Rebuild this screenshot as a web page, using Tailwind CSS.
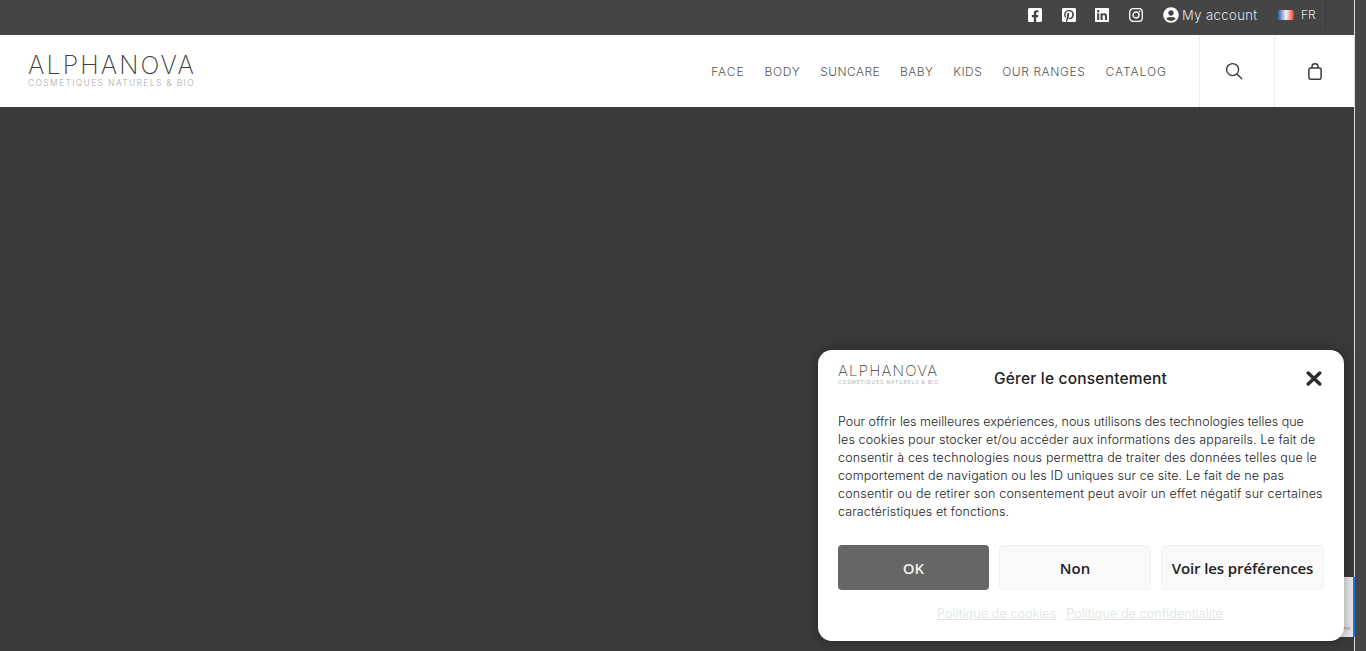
<!DOCTYPE html>
<html lang="fr">
<head>
  <meta charset="UTF-8" />
  <title>Alphanova</title>
  <script src="https://cdn.jsdelivr.net/npm/@tailwindcss/browser@4"></script>
</head>
<body class="h-[651px] overflow-hidden bg-[#3a3a3a] font-['Inter',sans-serif] antialiased">
  <div class="relative flex h-[651px] w-[1366px] overflow-hidden">

    <!-- Page -->
    <div class="flex w-[1354px] flex-col">
      <!-- Top bar -->
      <div class="flex h-[35px] items-start justify-end bg-[#454545] pr-[28px] text-white">
        <div class="flex h-[30px] items-center gap-[19.6px]">
          <svg class="h-[16px] w-[14px]" viewBox="0 0 448 512" fill="currentColor"><path d="M400 32H48A48 48 0 0 0 0 80v352a48 48 0 0 0 48 48h137.25V327.69h-63V256h63v-54.64c0-62.15 37-96.48 93.67-96.48 27.14 0 55.52 4.84 55.52 4.84v61h-31.27c-30.81 0-40.42 19.12-40.42 38.73V256h68.78l-11 71.69h-57.78V480H400a48 48 0 0 0 48-48V80a48 48 0 0 0-48-48z"/></svg>
          <svg class="h-[16px] w-[14px]" viewBox="0 0 448 512" fill="currentColor"><path d="M448 80v352c0 26.5-21.5 48-48 48H154.4c9.8-16.4 22.4-40 27.4-59.3 3-11.5 15.3-58.4 15.3-58.4 8 15.3 31.4 28.2 56.3 28.2 74.1 0 127.4-68.1 127.4-152.7 0-81.1-66.2-141.8-151.4-141.8-106 0-162.2 71.1-162.2 148.6 0 36 19.2 80.8 49.8 95.1 4.7 2.2 7.1 1.2 8.2-3.3.8-3.4 5-20.1 6.8-27.8.6-2.5.3-4.6-1.7-7-10.1-12.3-18.3-34.9-18.3-56 0-54.2 41-106.6 110.9-106.6 60.3 0 102.6 41.1 102.6 99.9 0 66.4-33.5 112.4-77.2 112.4-24.1 0-42.1-19.9-36.4-44.4 6.9-29.2 20.3-60.7 20.3-81.8 0-53-75.5-45.7-75.5 25 0 21.7 7.3 36.5 7.3 36.5-31.4 132.8-36.1 134.5-29.6 192.6l2.2.8H48c-26.5 0-48-21.5-48-48V80c0-26.5 21.5-48 48-48h352c26.5 0 48 21.5 48 48z"/></svg>
          <svg class="h-[16px] w-[14px]" viewBox="0 0 448 512" fill="currentColor"><path d="M416 32H31.9C14.3 32 0 46.5 0 64.3v383.4C0 465.5 14.3 480 31.9 480H416c17.6 0 32-14.5 32-32.3V64.3c0-17.8-14.4-32.3-32-32.3zM135.4 416H69V202.2h66.5V416zm-33.2-243c-21.3 0-38.5-17.3-38.5-38.5S80.9 96 102.2 96c21.2 0 38.5 17.3 38.5 38.5 0 21.3-17.2 38.5-38.5 38.5zm282.1 243h-66.4V312c0-24.8-.5-56.7-34.5-56.7-34.6 0-39.9 27-39.9 54.9V416h-66.4V202.2h63.7v29.2h.9c8.9-16.8 30.6-34.5 62.9-34.5 67.2 0 79.7 44.3 79.7 101.9V416z"/></svg>
          <svg class="h-[14px] w-[14px]" viewBox="0 0 14 14" fill="none" stroke="currentColor" stroke-width="1.3"><rect x="0.7" y="0.7" width="12.6" height="12.6" rx="3.4"/><circle cx="7" cy="7" r="3"/><circle cx="10.6" cy="3.4" r="0.8" fill="currentColor" stroke="none"/></svg>
        </div>
        <div class="ml-[20px] flex h-[30px] items-center">
          <svg class="h-[16px] w-[16px]" viewBox="0 0 496 512" fill="currentColor"><path d="M248 8C111 8 0 119 0 256s111 248 248 248 248-111 248-248S385 8 248 8zm0 96c48.6 0 88 39.4 88 88s-39.4 88-88 88-88-39.4-88-88 39.4-88 88-88zm0 344c-58.7 0-111.3-26.6-146.5-68.2 18.8-35.4 55.6-59.8 98.5-59.8 2.4 0 4.8.4 7.1 1.1 13 4.2 26.6 6.9 40.9 6.9 14.3 0 28-2.7 40.9-6.9 2.3-.7 4.7-1.1 7.1-1.1 42.9 0 79.7 24.4 98.5 59.8C359.3 421.4 306.7 448 248 448z"/></svg>
          <span class="ml-[3px] w-[76px] whitespace-nowrap pt-[1px] text-[13px] font-light tracking-[0.45px] text-[#e4e4e4]">My account</span>
        </div>
        <div class="ml-[20px] flex h-[30px] items-center border-r border-[#3c3c3c] pr-[10px]">
          <div class="h-[10px] w-[16px] rounded-[2px] bg-linear-to-r from-[#3558b0] via-[#f2f2f2] to-[#e3202a]"></div>
          <span class="ml-[7px] w-[14px] text-[12px] font-light text-[#e4e4e4]">FR</span>
        </div>
      </div>

      <!-- Header -->
      <header class="flex h-[72px] items-stretch bg-white pl-[28px]">
        <div class="flex w-[166px] flex-col justify-center pb-[1px]">
          <div class="h-[25px] whitespace-nowrap text-[25px] leading-[25px] font-extralight tracking-[2.1px] text-[#3f3f3f]">ALPHANOVA</div>
          <div class="whitespace-nowrap text-[8.5px] leading-[10px] font-light tracking-[1.35px] text-[#aaaaaa]">COSMÉTIQUES NATURELS &amp; BIO</div>
        </div>
        <nav class="ml-auto flex items-center gap-[20px] pt-[2px] pr-[32px] text-[12px] font-light whitespace-nowrap text-[#555555]">
          <a class="tracking-[0.93px]">FACE</a>
          <a class="tracking-[0.68px]">BODY</a>
          <a class="tracking-[0.39px]">SUNCARE</a>
          <a class="tracking-[0.43px]">BABY</a>
          <a class="tracking-[0.43px]">KIDS</a>
          <a class="tracking-[0.58px]">OUR RANGES</a>
          <a class="tracking-[0.98px]">CATALOG</a>
        </nav>
        <div class="flex w-[75px] items-center justify-center border-l border-[#ececec] pr-[6px]">
          <svg class="h-[18px] w-[18px]" viewBox="0 0 18 18" fill="none" stroke="#3a3a3a" stroke-width="1.4"><circle cx="7.6" cy="7.6" r="6"/><path d="M12 12l5 5"/></svg>
        </div>
        <div class="flex w-[80px] items-center justify-center border-l border-[#ececec]">
          <svg class="h-[17px] w-[14px]" viewBox="0 0 14 17" fill="none" stroke="#3a3a3a" stroke-width="1.5"><rect x="0.9" y="5" width="12.2" height="11.2" rx="1.5"/><path d="M4 5V3.4a3 2.6 0 0 1 6 0V5"/></svg>
        </div>
      </header>

      <main class="flex-1 bg-[#3a3a3a]"></main>
    </div>

    <!-- Scrollbar -->
    <div class="w-px bg-[#dddddd]"></div>
    <div class="flex-1 bg-[#454545]"></div>

    <!-- reCAPTCHA badge, mostly under the dialog -->
    <div class="absolute top-[577px] left-[1300px] flex h-[60px] w-[55px] items-end justify-end border-r-2 border-[#1a73e8] bg-[#e6e6e6] pr-[3px] pb-[6px] text-[4px] leading-[5px] text-[#777777]">Terms</div>

    <!-- Consent dialog -->
    <div class="absolute top-[350px] left-[818px] flex h-[291px] w-[526px] flex-col rounded-[14px] bg-white px-[20px] shadow-[0_0_12px_rgba(0,0,0,0.35)]">
      <div class="relative flex h-[56px] items-start pt-[13px]">
        <div class="w-[100px]">
          <div class="h-[15px] whitespace-nowrap text-[15px] leading-[15px] font-extralight tracking-[1.2px] text-[#3f3f3f]">ALPHANOVA</div>
          <div class="mt-[1px] whitespace-nowrap text-[5px] leading-[6px] tracking-[0.87px] text-[#b0b0b0]">COSMÉTIQUES NATURELS &amp; BIO</div>
        </div>
        <h2 class="mt-[5px] ml-[56px] whitespace-nowrap text-[15.5px] leading-[22px] font-medium tracking-[0.2px] text-[#222222]">Gérer le consentement</h2>
        <svg class="absolute top-[21px] right-[2px] h-[15px] w-[16px]" viewBox="0 0 16 15" fill="none" stroke="#2b2b2b" stroke-width="3.4" stroke-linecap="round"><path d="M2.2 2 13.8 13M13.8 2 2.2 13"/></svg>
      </div>
      <p class="mt-[7px] whitespace-nowrap text-[12.5px] leading-[18px] font-light tracking-[0.12px] text-[#222222]">
        <span class="tracking-[0.01px]">Pour offrir les meilleures expériences, nous utilisons des technologies telles que</span><br>
        les cookies pour stocker et/ou accéder aux informations des appareils. Le fait de<br>
        <span class="tracking-[0.17px]">consentir à ces technologies nous permettra de traiter des données telles que le</span><br>
        comportement de navigation ou les ID uniques sur ce site. Le fait de ne pas<br>
        <span class="tracking-[0.17px]">consentir ou de retirer son consentement peut avoir un effet négatif sur certaines</span><br>
        caractéristiques et fonctions.
      </p>
      <div class="mt-[24px] flex gap-[10px] font-['Open_Sans',sans-serif] text-[15px] font-semibold">
        <button class="h-[45px] w-[151px] rounded-[4px] bg-[#666666] pt-[1px] text-[#f0f0f0]">OK</button>
        <button class="h-[45px] w-[152px] rounded-[4px] border border-[#f2f2f2] bg-[#f9f9f9] pt-[1px] text-[#222222]">Non</button>
        <button class="h-[45px] w-[163px] whitespace-nowrap rounded-[4px] border border-[#f2f2f2] bg-[#f9f9f9] pt-[1px] tracking-[-0.1px] text-[#222222]">Voir les préférences</button>
      </div>
      <div class="mt-[15px] flex justify-center gap-[10px] pr-[2px] text-[12.5px] leading-[18px] font-light tracking-[0.13px] whitespace-nowrap text-[#dbe5db] underline">
        <a>Politique de cookies</a><a>Politique de confidentialité</a>
      </div>
    </div>

  </div>
</body>
</html>
